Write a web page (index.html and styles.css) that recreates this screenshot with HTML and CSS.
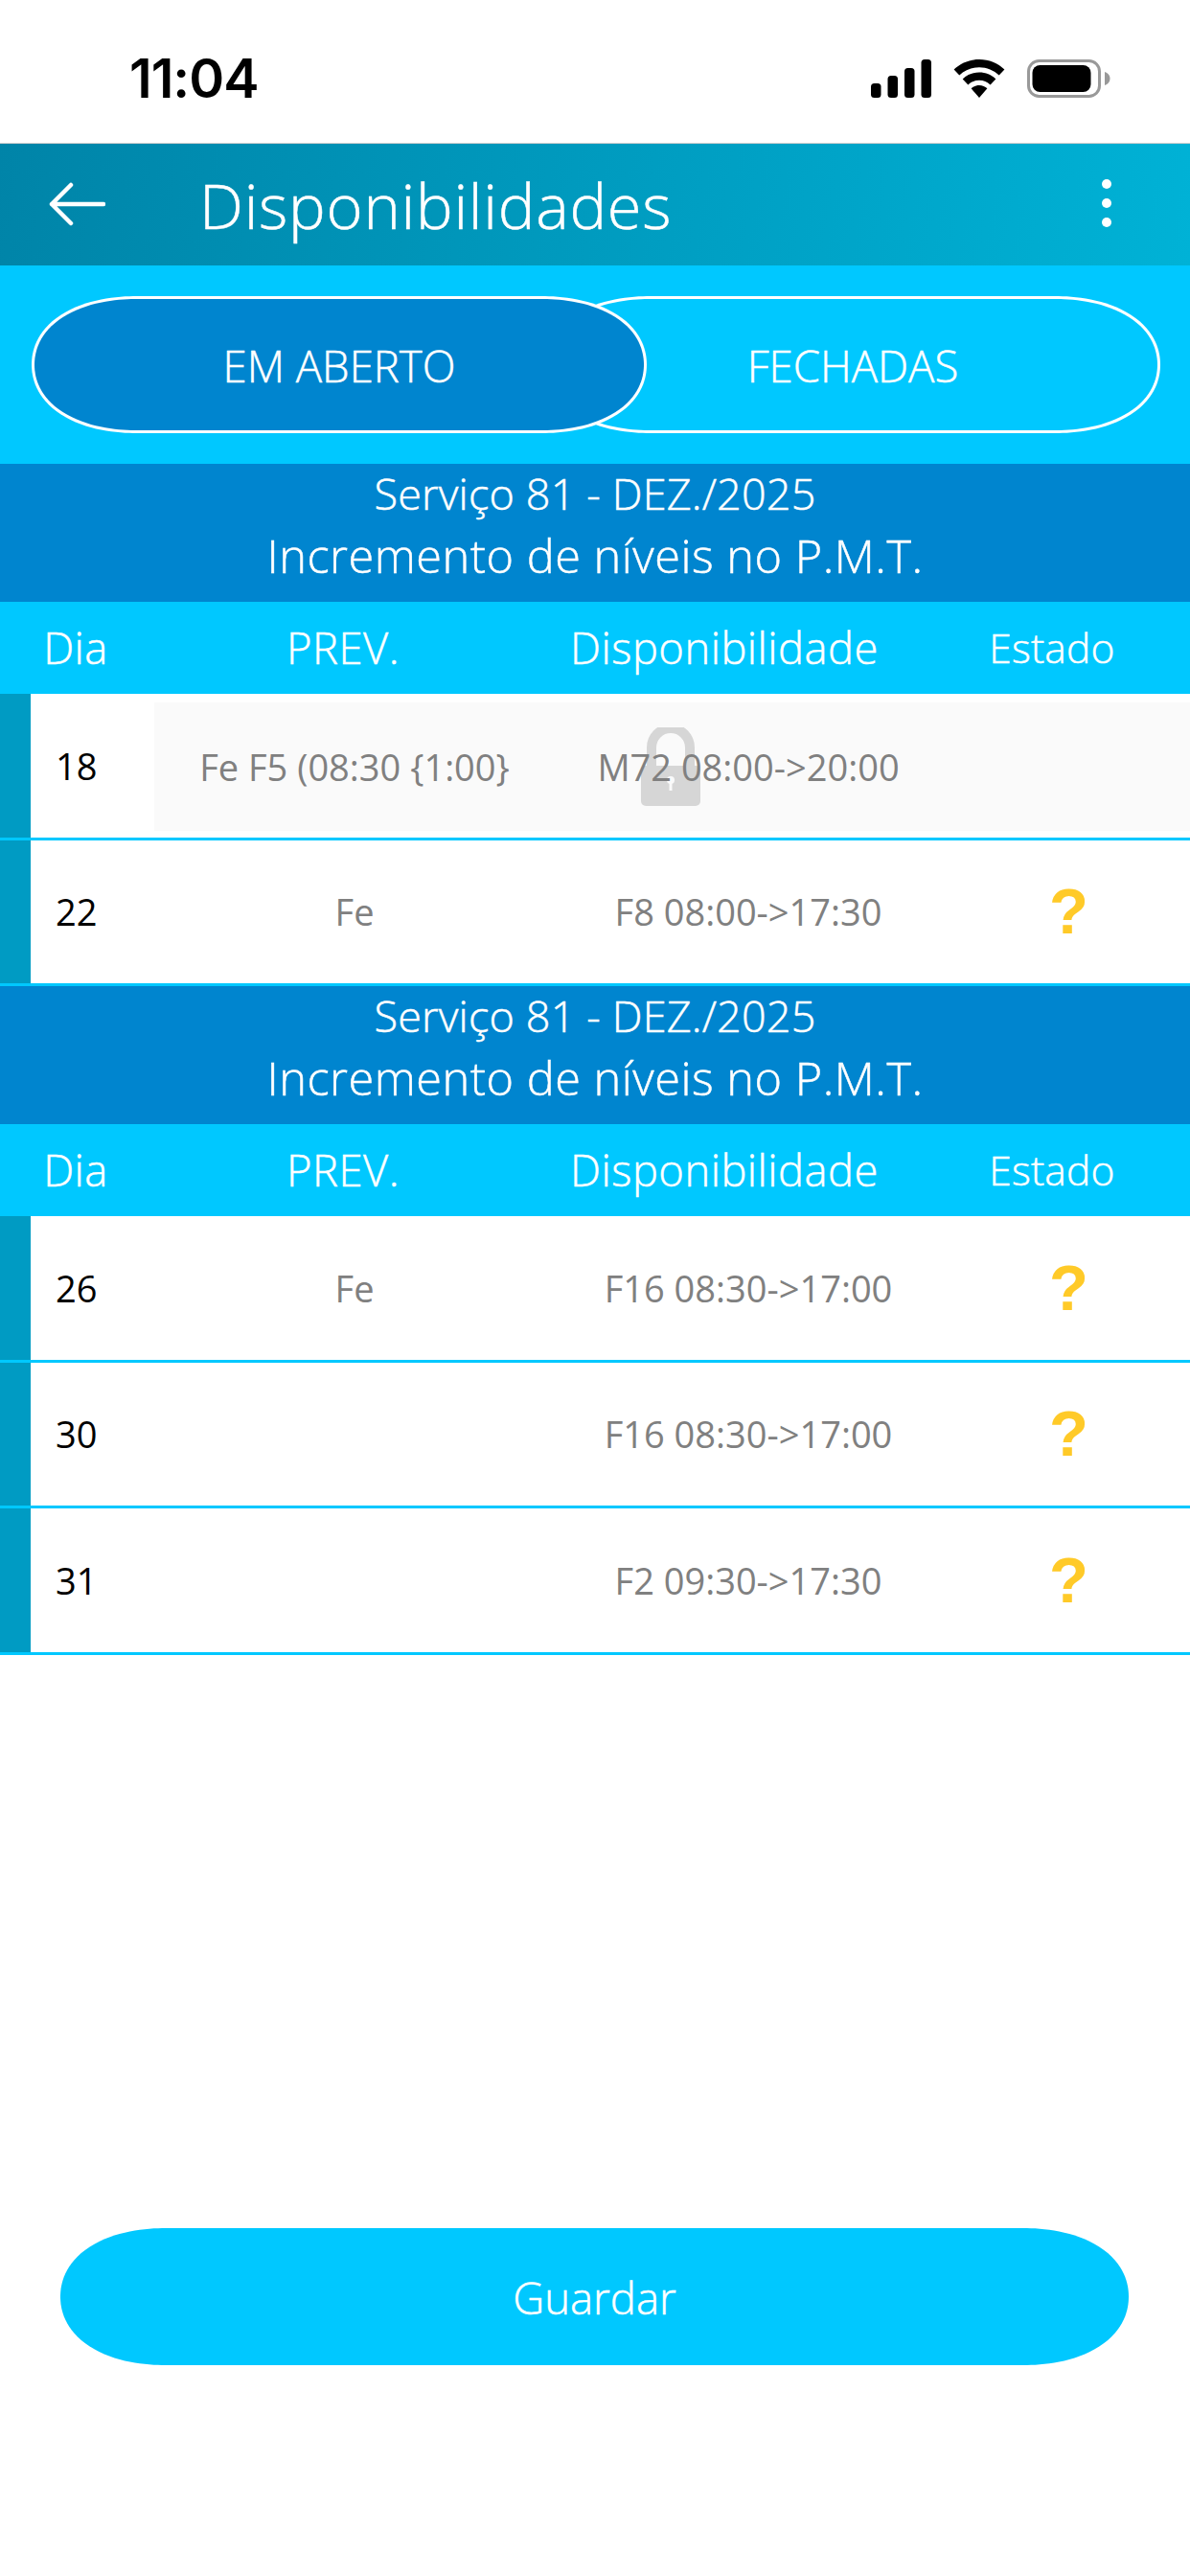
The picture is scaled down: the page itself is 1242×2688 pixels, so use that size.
FILE: index.html
```html
<!DOCTYPE html>
<html lang="pt">
<head>
<meta charset="utf-8">
<title>Disponibilidades</title>
<link rel="stylesheet" href="styles.css">
</head>
<body>
<div class="page">
  <div class="status">
    <span class="time">11:04</span>
    <div class="status-icons">
      <svg class="sig" width="63" height="40" viewBox="0 0 63 40"><rect x="0" y="25" width="10.500" height="15" rx="3.500"/><rect x="17.500" y="17" width="10.500" height="23" rx="3.500"/><rect x="35" y="9" width="10.500" height="31" rx="3.500"/><rect x="52.500" y="0" width="10.500" height="40" rx="3.500"/></svg>
      <svg class="wifi" width="54" height="40" viewBox="0 0 54 40"><path d="M27 0C16.800 0 7.500 4 .6 10.500l5.700 6C11.700 11.300 19 8.200 27 8.200s15.300 3.100 20.700 8.300l5.700-6C46.500 4 37.200 0 27 0z"/><path d="M27 13.500c-6.700 0-12.800 2.600-17.300 6.900l5.700 6c3-2.900 7.100-4.700 11.600-4.700s8.600 1.800 11.600 4.700l5.700-6C39.800 16.100 33.700 13.500 27 13.500z"/><path d="M27 27c-3.300 0-6.200 1.300-8.400 3.300L27 40l8.400-9.700C33.200 28.300 30.300 27 27 27z"/></svg>
      <svg class="batt" width="87" height="40" viewBox="0 0 87 40"><rect x="1.500" y="1.500" width="74" height="37" rx="11" fill="#fff" stroke="#999" stroke-width="3"/><rect x="5.500" y="6" width="61" height="28" rx="8"/><path d="M81 13c3 .8 5.500 3.500 5.500 7s-2.500 6.200-5.500 7z" fill="#999"/></svg>
    </div>
  </div>

  <header class="appbar">
    <svg class="back" width="60" height="46" viewBox="0 0 60 46"><path d="M58 23H4M24 3 4 23l20 20" fill="none" stroke="#fff" stroke-width="4.500" stroke-linecap="round" stroke-linejoin="round"/></svg>
    <h1 class="title">Disponibilidades</h1>
    <div class="dots"><i></i><i></i><i></i></div>
  </header>

  <div class="tabs">
    <div class="tab tab-active">EM ABERTO</div>
    <div class="tab tab-other">FECHADAS</div>
  </div>

  <section>
    <div class="sec-head">
      <div class="sec-line1">Serviço 81 - DEZ./2025</div>
      <div class="sec-line2">Incremento de níveis no P.M.T.</div>
    </div>
    <div class="cols">
      <span class="col-dia">Dia</span>
      <span>PREV.</span>
      <span>Disponibilidade</span>
      <span class="col-estado">Estado</span>
    </div>
    <div class="row">
      <div class="bar"></div>
      <div class="day">18</div>
      <div class="cells locked">
        <span class="cell">Fe F5 (08:30 {1:00}</span>
        <span class="cell">M72 08:00-&gt;20:00</span>
        <span class="cell"></span>
        <svg class="lock" width="62" height="82" viewBox="0 0 62 82"><path d="M11 42V21a20 20 0 0 1 40 0v21" fill="none" stroke="#d6d6d6" stroke-width="10"/><path d="M5 40h52a5 5 0 0 1 5 5v32a5 5 0 0 1-5 5H5a5 5 0 0 1-5-5V45a5 5 0 0 1 5-5z" fill="#d6d6d6"/><circle cx="31" cy="55" r="4" fill="#fafafa"/><rect x="29.500" y="55" width="3" height="11" fill="#fafafa"/></svg>
      </div>
    </div>
    <div class="row">
      <div class="bar"></div>
      <div class="day">22</div>
      <div class="cells">
        <span class="cell">Fe</span>
        <span class="cell">F8 08:00-&gt;17:30</span>
        <span class="cell state">?</span>
      </div>
    </div>
  </section>

  <section>
    <div class="sec-head">
      <div class="sec-line1">Serviço 81 - DEZ./2025</div>
      <div class="sec-line2">Incremento de níveis no P.M.T.</div>
    </div>
    <div class="cols">
      <span class="col-dia">Dia</span>
      <span>PREV.</span>
      <span>Disponibilidade</span>
      <span class="col-estado">Estado</span>
    </div>
    <div class="row">
      <div class="bar"></div>
      <div class="day">26</div>
      <div class="cells">
        <span class="cell">Fe</span>
        <span class="cell">F16 08:30-&gt;17:00</span>
        <span class="cell state">?</span>
      </div>
    </div>
    <div class="row">
      <div class="bar"></div>
      <div class="day">30</div>
      <div class="cells">
        <span class="cell"></span>
        <span class="cell">F16 08:30-&gt;17:00</span>
        <span class="cell state">?</span>
      </div>
    </div>
    <div class="row">
      <div class="bar"></div>
      <div class="day">31</div>
      <div class="cells">
        <span class="cell"></span>
        <span class="cell">F2 09:30-&gt;17:30</span>
        <span class="cell state">?</span>
      </div>
    </div>
  </section>

  <div class="footer">
    <div class="save">Guardar</div>
  </div>
</div>
</body>
</html>
```
FILE: styles.css
```css
* { box-sizing: border-box; }
html, body { margin: 0; padding: 0; background: #fff; }
.page {
  width: 1242px;
  height: 2688px;
  display: flex;
  flex-direction: column;
  font-family: "Open Sans", "Liberation Sans", sans-serif;
  font-weight: 300;
  color: #fff;
  -webkit-text-stroke: 0.5px #fff;
  overflow: hidden;
}

/* status bar */
.status {
  height: 150px;
  flex: none;
  border-bottom: 1px solid #d0d0d0;
  background: #fff;
  color: #000;
  display: flex;
  justify-content: space-between;
  align-items: flex-start;
  padding: 62px 83px 0 135px;
}
.time {
  font-family: Inter, "Liberation Sans", sans-serif;
  font-weight: 600;
  font-size: 56px;
  line-height: 40px;
  letter-spacing: -1px;
  -webkit-text-stroke: 0;
}
.status-icons { display: flex; gap: 23px; height: 40px; }
.status-icons svg { display: block; fill: #000; }

/* app bar */
.appbar {
  height: 127px;
  flex: none;
  background: linear-gradient(100deg, #0084a8 0%, #00b2d6 100%);
  display: flex;
  align-items: center;
  padding-left: 50px;
}
.back { flex: none; margin-top: -2px; }
.title {
  margin: 0 0 0 98px;
  font-size: 65px;
  font-weight: 300;
  letter-spacing: 0.75px;
  line-height: 80px;
  flex: 1;
}
.dots {
  display: flex;
  flex-direction: column;
  gap: 10px;
  margin-right: 82px;
  margin-top: -3px;
}
.dots i { display: block; width: 10px; height: 10px; border-radius: 50%; background: #fff; }

/* tabs */
.tabs {
  flex: none;
  height: 207px;
  background: #00c8ff;
  display: flex;
  padding: 32px 33px;
}
.tab {
  width: 642px;
  height: 143px;
  border: 3px solid #fff;
  border-radius: 110px / 71.5px;
  corner-shape: superellipse(1.1);
  display: flex;
  align-items: center;
  justify-content: center;
  font-size: 45.5px;
  flex: none;
}
.tab-active { background: #0085cf; position: relative; z-index: 1; }
.tab-other { margin-left: -106px; }

/* section */
.sec-head {
  height: 144px;
  background: #0085cf;
  text-align: center;
  padding-top: 1px;
}
.sec-line1 { font-size: 45px; line-height: 60px; letter-spacing: 0.15px; }
.sec-line2 { font-size: 48.7px; line-height: 68px; letter-spacing: 0.5px; }
.cols {
  height: 96px;
  background: #00c8ff;
  display: grid;
  grid-template-columns: 158px 400px 396px 288px;
  align-items: center;
  text-align: center;
  font-size: 45.3px;
  letter-spacing: 0.5px;
  padding-bottom: 2px;
}
.col-estado { font-size: 42.5px; letter-spacing: 0.2px; }

/* rows */
.row {
  height: 152.5px;
  display: flex;
  border-bottom: 3px solid #00c8ff;
}
.bar { width: 32px; flex: none; background: #009bc3; }
.day {
  width: 129px;
  flex: none;
  padding-left: 26px;
  display: flex;
  align-items: center;
  font-size: 38px;
  font-weight: 400;
  color: #000;
  -webkit-text-stroke: 0;
}
.cells {
  flex: 1;
  display: grid;
  grid-template-columns: 418px 404px 1fr;
  align-items: center;
  text-align: center;
  color: #808080;
  font-size: 38px;
  font-weight: 400;
  -webkit-text-stroke: 0;
  position: relative;
}
.cell { position: relative; z-index: 1; }
.locked { background: #fafafa; margin: 9px 0 7px; }
.lock { position: absolute; left: 508px; top: 26px; }
.state {
  font-family: "Liberation Sans", sans-serif;
  font-weight: 700;
  font-size: 67px;
  line-height: 66px;
  color: #ffca28;
  padding-left: 6px;
}

/* footer */
.footer {
  margin-top: auto;
  padding: 0 64px 220px 63px;
}
.save {
  height: 143px;
  background: #00c8ff;
  border-radius: 110px / 71.5px;
  corner-shape: superellipse(1.1);
  display: flex;
  align-items: center;
  justify-content: center;
  font-size: 45.5px;
}
```
